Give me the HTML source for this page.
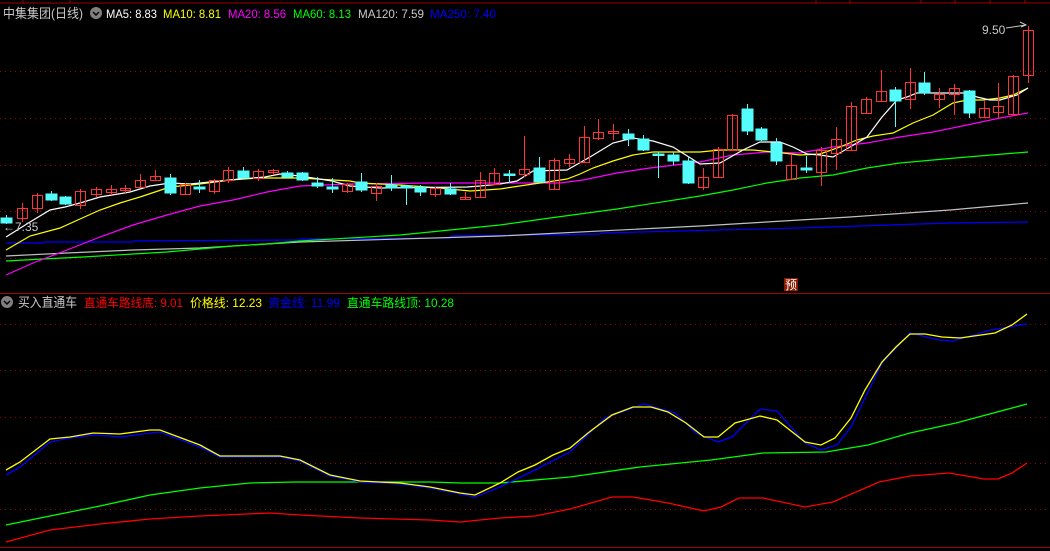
<!DOCTYPE html>
<html><head><meta charset="utf-8"><style>
html,body{margin:0;padding:0;background:#000;width:1050px;height:551px;overflow:hidden}
svg{display:block}
text{font-family:"Liberation Sans","Noto Sans CJK SC",sans-serif;font-size:12px}
</style></head><body>
<svg width="1050" height="551" viewBox="0 0 1050 551" xmlns="http://www.w3.org/2000/svg">
<rect width="1050" height="551" fill="#000"/>
<line x1="0" y1="3" x2="1050" y2="3" stroke="#a00000"/>
<g stroke="#a00000"><line x1="23" y1="0" x2="23" y2="3"/><line x1="70" y1="0" x2="70" y2="3"/><line x1="816" y1="0" x2="816" y2="3"/><line x1="850" y1="0" x2="850" y2="3"/><line x1="921" y1="0" x2="921" y2="3"/><line x1="955" y1="0" x2="955" y2="3"/><line x1="990" y1="0" x2="990" y2="3"/><line x1="1025" y1="0" x2="1025" y2="3"/></g>
<line x1="0" y1="293.5" x2="1050" y2="293.5" stroke="#a00000"/>
<line x1="0" y1="547.5" x2="1050" y2="547.5" stroke="#a00000"/>
<g stroke="#a00000" stroke-dasharray="1 4">
<line x1="0" y1="71.5" x2="1050" y2="71.5"/><line x1="0" y1="118.5" x2="1050" y2="118.5"/><line x1="0" y1="165.5" x2="1050" y2="165.5"/><line x1="0" y1="211.5" x2="1050" y2="211.5"/><line x1="0" y1="258.5" x2="1050" y2="258.5"/>
<line x1="0" y1="324.5" x2="1050" y2="324.5"/><line x1="0" y1="370.5" x2="1050" y2="370.5"/><line x1="0" y1="417.5" x2="1050" y2="417.5"/><line x1="0" y1="463.5" x2="1050" y2="463.5"/><line x1="0" y1="509.5" x2="1050" y2="509.5"/>
</g>
<g fill="none" stroke-width="1.2">
<polyline stroke="#0000ff" points="6,243 43,243 44,242 133,242 134,241 300,240 300,239 450,238 451,236 600,234 601,233 800,228 950,223 1028,222"/>
<polyline stroke="#c0c0c0" points="6,256 67,253 133,250 200,248 300,242 500,236 700,226 850,217 950,210 1028,203"/>
<polyline stroke="#00ff00" points="6,261 43,259 83,257 133,254 167,252 200,249 233,246 267,244 300,241 400,235 500,225 550,218 617,209 700,196 733,190 767,183 800,178 833,175 867,168 900,163 933,160 967,157 1028,152"/>
<polyline stroke="#ff00ff" points="6,275 33,263 67,250 100,237 133,225 167,215 200,206 233,200 267,192 300,186 350,184 430,183 560,183 583,180 617,173 650,168 700,162 733,155 767,152 800,153 833,147 867,143 900,137 933,132 967,125 1000,118 1028,113"/>
<polyline stroke="#ffff00" points="6,250 30,236 60,228 80,219 100,210 120,203 140,197 155,192 170,187 200,184 230,180 260,178 300,178 350,181 360,183 400,185 440,188 470,191 500,189 533,184 547,182 567,179 580,174 593,168 613,161 633,155 653,152 700,152 720,150 753,150 783,153 800,155 820,154 840,147 857,140 873,136 893,133 913,123 933,115 953,103 967,100 983,100 1000,98 1013,95 1028,88"/>
<polyline stroke="#ffffff" points="6,237 30,222 50,210 65,207 80,203 100,197 130,192 150,186 170,183 190,184 220,181 240,179 265,177 280,174 300,176 332,181 350,186 380,188 467,187 480,186 500,184 517,181 533,171 567,170 590,157 613,143 633,138 653,141 673,147 700,164 720,163 743,150 760,142 780,142 793,147 807,154 820,155 833,157 850,147 867,137 882,117 897,100 907,97 917,93 940,93 967,93 977,97 990,100 1000,100 1017,95 1028,88"/>
</g>
<g stroke="#ff3333" fill="none" stroke-width="1">
<line x1="22.5" y1="203" x2="22.5" y2="222"/><rect x="17.5" y="208.5" width="10" height="10"/>
<line x1="37.5" y1="193" x2="37.5" y2="213"/><rect x="32.5" y="195.5" width="10" height="13"/>
<line x1="80.5" y1="189" x2="80.5" y2="209"/><rect x="75.5" y="191.5" width="10" height="14"/>
<line x1="96.5" y1="187" x2="96.5" y2="197"/><rect x="91.5" y="189.5" width="10" height="5"/>
<line x1="111.5" y1="185" x2="111.5" y2="195"/><rect x="106.5" y="189.5" width="10" height="3"/>
<line x1="125.5" y1="185" x2="125.5" y2="193"/><rect x="120.5" y="188.5" width="10" height="2"/>
<line x1="140.5" y1="174" x2="140.5" y2="188"/><rect x="135.5" y="180.5" width="10" height="7"/>
<line x1="155.5" y1="170" x2="155.5" y2="181"/><rect x="150.5" y="176.5" width="10" height="4"/>
<line x1="185.5" y1="183" x2="185.5" y2="195"/><rect x="180.5" y="184.5" width="10" height="10"/>
<line x1="214.5" y1="179" x2="214.5" y2="194"/><rect x="209.5" y="180.5" width="10" height="11"/>
<line x1="228.5" y1="167" x2="228.5" y2="183"/><rect x="223.5" y="170.5" width="10" height="10"/>
<line x1="258.5" y1="169" x2="258.5" y2="181"/><rect x="253.5" y="171.5" width="10" height="7"/>
<line x1="273.5" y1="169" x2="273.5" y2="175"/><rect x="268.5" y="170.5" width="10" height="2"/>
<line x1="347.5" y1="183" x2="347.5" y2="193"/><rect x="342.5" y="184.5" width="10" height="7"/>
<line x1="376.5" y1="183" x2="376.5" y2="201"/><rect x="371.5" y="186.5" width="10" height="7"/>
<line x1="435.5" y1="187" x2="435.5" y2="197"/><rect x="430.5" y="188.5" width="10" height="6"/>
<line x1="465.5" y1="192" x2="465.5" y2="199"/><rect x="460.5" y="197.5" width="10" height="2"/>
<line x1="480.5" y1="172" x2="480.5" y2="197"/><rect x="475.5" y="180.5" width="10" height="17"/>
<line x1="494.5" y1="168" x2="494.5" y2="185"/><rect x="489.5" y="173.5" width="10" height="11"/>
<line x1="524.5" y1="136" x2="524.5" y2="177"/><rect x="519.5" y="169.5" width="10" height="5"/>
<line x1="554.5" y1="158" x2="554.5" y2="189"/><rect x="549.5" y="160.5" width="10" height="29"/>
<line x1="569.5" y1="154" x2="569.5" y2="167"/><rect x="564.5" y="159.5" width="10" height="4"/>
<line x1="584.5" y1="126" x2="584.5" y2="163"/><rect x="579.5" y="137.5" width="10" height="25"/>
<line x1="598.5" y1="119" x2="598.5" y2="140"/><rect x="593.5" y="132.5" width="10" height="6"/>
<line x1="613.5" y1="124" x2="613.5" y2="140"/><rect x="608.5" y="131.5" width="10" height="2"/>
<line x1="703.5" y1="168" x2="703.5" y2="190"/><rect x="698.5" y="177.5" width="10" height="10"/>
<line x1="718.5" y1="147" x2="718.5" y2="178"/><rect x="713.5" y="149.5" width="10" height="28"/>
<line x1="732.5" y1="114" x2="732.5" y2="151"/><rect x="727.5" y="115.5" width="10" height="35"/>
<line x1="791.5" y1="154" x2="791.5" y2="180"/><rect x="786.5" y="165.5" width="10" height="14"/>
<line x1="821.5" y1="147" x2="821.5" y2="186"/><rect x="816.5" y="150.5" width="10" height="22"/>
<line x1="836.5" y1="127" x2="836.5" y2="170"/><rect x="831.5" y="139.5" width="10" height="14"/>
<line x1="851.5" y1="102" x2="851.5" y2="151"/><rect x="846.5" y="106.5" width="10" height="44"/>
<line x1="866.5" y1="97" x2="866.5" y2="114"/><rect x="861.5" y="99.5" width="10" height="14"/>
<line x1="881.5" y1="70" x2="881.5" y2="102"/><rect x="876.5" y="91.5" width="10" height="10"/>
<line x1="910.5" y1="68" x2="910.5" y2="109"/><rect x="905.5" y="82.5" width="10" height="17"/>
<line x1="939.5" y1="88" x2="939.5" y2="108"/><rect x="934.5" y="94.5" width="10" height="5"/>
<line x1="954.5" y1="84" x2="954.5" y2="115"/><rect x="949.5" y="88.5" width="10" height="6"/>
<line x1="984.5" y1="101" x2="984.5" y2="118"/><rect x="979.5" y="108.5" width="10" height="9"/>
<line x1="998.5" y1="83" x2="998.5" y2="119"/><rect x="993.5" y="106.5" width="10" height="6"/>
<line x1="1013.5" y1="75" x2="1013.5" y2="115"/><rect x="1008.5" y="76.5" width="10" height="38"/>
<line x1="1028.5" y1="26" x2="1028.5" y2="83"/><rect x="1023.5" y="30.5" width="10" height="45"/>
</g>
<g stroke="#54fcfc" fill="#54fcfc" stroke-width="1">
<line x1="6.5" y1="215" x2="6.5" y2="224"/><rect x="1" y="218" width="11" height="5"/>
<line x1="51.5" y1="191" x2="51.5" y2="201"/><rect x="46" y="194" width="11" height="6"/>
<line x1="65.5" y1="196" x2="65.5" y2="205"/><rect x="60" y="197" width="11" height="7"/>
<line x1="170.5" y1="174" x2="170.5" y2="195"/><rect x="165" y="178" width="11" height="15"/>
<line x1="199.5" y1="180" x2="199.5" y2="193"/><rect x="194" y="187" width="11" height="2"/>
<line x1="243.5" y1="167" x2="243.5" y2="179"/><rect x="238" y="171" width="11" height="7"/>
<line x1="287.5" y1="171" x2="287.5" y2="178"/><rect x="282" y="173" width="11" height="4"/>
<line x1="302.5" y1="172" x2="302.5" y2="181"/><rect x="297" y="173" width="11" height="7"/>
<line x1="317.5" y1="177" x2="317.5" y2="188"/><rect x="312" y="183" width="11" height="3"/>
<line x1="332.5" y1="178" x2="332.5" y2="193"/><rect x="327" y="187" width="11" height="2"/>
<line x1="361.5" y1="173" x2="361.5" y2="192"/><rect x="356" y="182" width="11" height="8"/>
<line x1="391.5" y1="175" x2="391.5" y2="191"/><rect x="386" y="185" width="11" height="3"/>
<line x1="406.5" y1="185" x2="406.5" y2="205"/><rect x="401" y="186" width="11" height="2"/>
<line x1="420.5" y1="185" x2="420.5" y2="196"/><rect x="415" y="187" width="11" height="5"/>
<line x1="450.5" y1="183" x2="450.5" y2="195"/><rect x="445" y="189" width="11" height="5"/>
<line x1="509.5" y1="170" x2="509.5" y2="183"/><rect x="504" y="174" width="11" height="1.5"/>
<line x1="539.5" y1="157" x2="539.5" y2="183"/><rect x="534" y="168" width="11" height="14"/>
<line x1="628.5" y1="129" x2="628.5" y2="146"/><rect x="623" y="134" width="11" height="5"/>
<line x1="643.5" y1="135" x2="643.5" y2="151"/><rect x="638" y="139" width="11" height="11"/>
<line x1="658.5" y1="152" x2="658.5" y2="178"/><rect x="653" y="154" width="11" height="1.5"/>
<line x1="673.5" y1="152" x2="673.5" y2="165"/><rect x="668" y="155" width="11" height="6"/>
<line x1="688.5" y1="157" x2="688.5" y2="184"/><rect x="683" y="161" width="11" height="22"/>
<line x1="747.5" y1="104" x2="747.5" y2="135"/><rect x="742" y="109" width="11" height="22"/>
<line x1="761.5" y1="127" x2="761.5" y2="141"/><rect x="756" y="129" width="11" height="11"/>
<line x1="776.5" y1="138" x2="776.5" y2="165"/><rect x="771" y="143" width="11" height="18"/>
<line x1="806.5" y1="156" x2="806.5" y2="173"/><rect x="801" y="168" width="11" height="2"/>
<line x1="895.5" y1="87" x2="895.5" y2="127"/><rect x="890" y="90" width="11" height="11"/>
<line x1="924.5" y1="72" x2="924.5" y2="95"/><rect x="919" y="83" width="11" height="10"/>
<line x1="969.5" y1="90" x2="969.5" y2="118"/><rect x="964" y="91" width="11" height="22"/>
</g>
<text x="3" y="231" fill="#c8c8c8">&#8592;7.35</text>
<text x="982" y="34" fill="#c8c8c8">9.50</text>
<polyline points="1006,28 1026,25" stroke="#c8c8c8" fill="none"/>
<path d="M1020,22 L1026,25 L1021,27" stroke="#c8c8c8" fill="none"/>
<rect x="784" y="278" width="14" height="13" fill="#8a1a00"/>
<text x="785" y="289" fill="#ffffff">预</text>
<text x="3" y="18" fill="#c8c8c8" textLength="80" lengthAdjust="spacingAndGlyphs" style="font-size:13px">中集集团(日线)</text>
<circle cx="96" cy="13" r="6" fill="#808080"/>
<path d="M93,12 L96,15 L99,12" stroke="#000" stroke-width="1.5" fill="none"/>
<text x="106" y="18" fill="#ffffff" textLength="51" lengthAdjust="spacingAndGlyphs">MA5: 8.83</text>
<text x="163" y="18" fill="#ffff00" textLength="58" lengthAdjust="spacingAndGlyphs">MA10: 8.81</text>
<text x="228" y="18" fill="#ff00ff" textLength="58" lengthAdjust="spacingAndGlyphs">MA20: 8.56</text>
<text x="293" y="18" fill="#00ff00" textLength="58" lengthAdjust="spacingAndGlyphs">MA60: 8.13</text>
<text x="358" y="18" fill="#c8c8c8" textLength="66" lengthAdjust="spacingAndGlyphs">MA120: 7.59</text>
<text x="430" y="18" fill="#0000ff" textLength="66" lengthAdjust="spacingAndGlyphs">MA250: 7.40</text>
<circle cx="7" cy="302" r="6" fill="#808080"/>
<path d="M4,301 L7,304 L10,301" stroke="#000" stroke-width="1.5" fill="none"/>
<text x="18" y="307" fill="#c8c8c8" textLength="59" lengthAdjust="spacingAndGlyphs" style="font-size:13px">买入直通车</text>
<text x="84" y="307" fill="#ff0000" textLength="99" lengthAdjust="spacingAndGlyphs">直通车路线底: 9.01</text>
<text x="190" y="307" fill="#ffff00" textLength="72" lengthAdjust="spacingAndGlyphs">价格线: 12.23</text>
<text x="268" y="307" fill="#0000ff" textLength="72" lengthAdjust="spacingAndGlyphs">资金线: 11.99</text>
<text x="347" y="307" fill="#00ff00" textLength="107" lengthAdjust="spacingAndGlyphs">直通车路线顶: 10.28</text>
<g fill="none" stroke-width="1.3">
<polyline stroke="#ff0000" points="6,542 50,530 100,524 150,519 200,516 270,513 300,515 360,518 430,520 460,522 500,518 535,516 570,509 612,497 633,497 668,503 704,511 721,507 739,498 763,498 805,507 833,502 879,482 910,476 949,473 984,479 998,479 1012,473 1027,463"/>
<polyline stroke="#00ff00" points="6,525 50,516 100,506 150,495 200,488 250,483 295,482 430,482 460,483 500,483 570,477 640,467 711,460 763,453 826,452 868,445 910,433 956,423 1027,404"/>
<polyline stroke="#0000ff" points="6,475 20,467 50,442 70,438 93,435 110,436 120,437 150,433 160,432 200,447 220,457 250,457 280,457 300,461 330,476 360,482 400,484 430,488 460,494 475,497 500,487 535,470 570,452 605,418 644,404 675,413 696,433 718,442 732,437 760,409 777,411 805,443 821,450 837,445 851,427 882,363 910,333 939,340 953,341 991,330 1027,324"/>
<polyline stroke="#ffff00" points="6,470 20,462 50,439 70,437 93,433 120,434 150,430 160,430 200,445 220,456 250,456 280,456 300,460 330,475 360,481 400,483 430,487 460,493 475,495 500,483 518,472 535,465 553,455 570,448 588,433 612,415 633,407 651,407 668,412 686,423 704,437 718,437 735,423 760,416 777,420 805,442 821,445 835,438 851,418 865,390 882,362 896,347 910,334 925,334 942,337 960,338 995,333 1012,325 1027,314"/>
</g>
</svg>
</body></html>
